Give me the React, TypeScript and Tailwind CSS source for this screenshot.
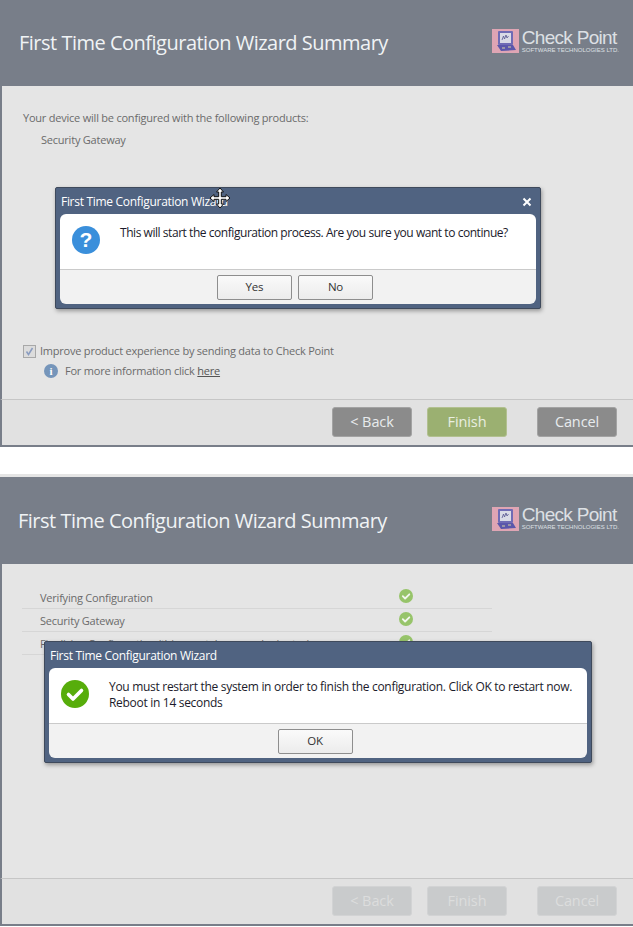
import React from 'react';

const uiFont = "font-['Open_Sans','Noto_Sans',sans-serif]";

function CheckPointLogo() {
  return (
    <div className="flex items-center gap-[3px] -mt-[4px]">
      <svg width="27" height="24" viewBox="0 0 27 24">
        <rect width="27" height="24" fill="#dfa5b4" />
        <rect x="6" y="2" width="15" height="14" rx="1" fill="#6f6bb5" />
        <rect x="8" y="4" width="11" height="10" fill="#d9dbe6" />
        <path d="M10 11l1.500-4 1 3 1.500-4 1 3 1.500-2" stroke="#55558f" strokeWidth="0.8" fill="none" />
        <path d="M5 16h16l3 5-15 1z" fill="#5b57ab" />
        <path d="M10 19h3M16 18h3" stroke="#d8d4a0" strokeWidth="1" />
      </svg>
      <div className="flex flex-col text-[#dde0e4] font-['Liberation_Sans',sans-serif]">
        <span className="text-[19px] leading-[18px] tracking-[-0.7px] whitespace-nowrap">Check Point</span>
        <span className="text-[6px] leading-[7px] whitespace-nowrap">SOFTWARE TECHNOLOGIES LTD.</span>
      </div>
    </div>
  );
}

function WizardButton({ label, tone }: { label: string; tone: 'gray' | 'green' | 'off' }) {
  const tones = {
    gray: 'bg-[#8b8b8b] border-[#a3a3a3] text-[#e8ebee]',
    green: 'bg-[#9bb071] border-[#b2c090] text-[#e9eee0]',
    off: 'bg-[#c9cbcc] border-[#d2d3d4] text-[#dcdddd]',
  };
  return (
    <div className={`w-[80px] h-[30px] rounded-[3px] border flex items-center justify-center text-[14.5px] tracking-[-0.1px] ${tones[tone]}`}>
      {label}
    </div>
  );
}

function WizardFrame({
  children,
  tone,
  headerHeight,
  bodyHeight,
  titleLeft,
}: {
  children: React.ReactNode;
  tone: 'gray' | 'off';
  headerHeight: string;
  bodyHeight: string;
  titleLeft: string;
}) {
  return (
    <div className="relative w-[633px] border-b-2 border-[#787e89]">
      <div className={`bg-[#787e89] flex items-center justify-between pr-[14px] ${headerHeight} ${titleLeft}`}>
        <h1 className="text-[20px] leading-[28px] tracking-[-0.5px] text-[#f0f3f5]">First Time Configuration Wizard Summary</h1>
        <CheckPointLogo />
      </div>
      <div className={`bg-[#e5e5e5] border-l-2 border-[#787e89] ${bodyHeight}`}>{children}</div>
      <div className="h-[46px] bg-[#e1e1e1] border-l-2 border-t border-t-[#c6c6c6] border-l-[#787e89] flex items-center justify-end pr-[16px] pb-[2px]">
        <WizardButton label="< Back" tone={tone} />
        <div className="ml-[15px]">
          <WizardButton label="Finish" tone={tone === 'off' ? 'off' : 'green'} />
        </div>
        <div className="ml-[30px]">
          <WizardButton label="Cancel" tone={tone} />
        </div>
      </div>
    </div>
  );
}

function Dialog({
  className,
  icon,
  lines,
  buttons,
  closable,
  textClass,
}: {
  className: string;
  icon: React.ReactNode;
  lines: string[];
  buttons: string[];
  closable?: boolean;
  textClass: string;
}) {
  return (
    <div className={`absolute bg-[#506381] border border-[#3f4a5c] rounded-[2px] shadow-[1px_2px_4px_rgba(0,0,0,0.35)] px-[4px] pb-[4px] ${className}`}>
      <div className="h-[26px] flex items-center justify-between pl-[1px] pt-[1px] pr-[4px] text-white text-[12px] tracking-[-0.3px]">
        <span>First Time Configuration Wizard</span>
        {closable && (
          <svg width="10" height="10" viewBox="0 0 10 10">
            <path d="M1.500 1.500l7 7M8.500 1.500l-7 7" stroke="#fff" strokeWidth="2" />
          </svg>
        )}
      </div>
      <div className="rounded-[6px] overflow-hidden">
        <div className="h-[55px] bg-white flex items-start pl-[12px] pt-[12px]">
          {icon}
          <div className={`ml-[20px] text-[12px] leading-[16px] text-[#1b1b2b] -mt-[1px] whitespace-nowrap ${textClass}`}>
            {lines.map(line => (
              <div key={line}>{line}</div>
            ))}
          </div>
        </div>
        <div className="h-[35px] bg-[#f2f2f2] border-t border-[#cacaca] flex items-center justify-center gap-[6px] pr-[6px]">
          {buttons.map(b => (
            <div
              key={b}
              className="w-[75px] h-[25px] rounded-[2px] border border-[#8e8e8e] bg-gradient-to-b from-[#fafafa] to-[#ececec] flex items-center justify-center text-[11.5px] tracking-[-0.2px] text-[#333]"
            >
              {b}
            </div>
          ))}
        </div>
      </div>
    </div>
  );
}

function QuestionIcon() {
  return (
    <div className="w-[28px] h-[28px] shrink-0 rounded-full bg-[#3a8fdb] text-white font-['Liberation_Sans',sans-serif] font-bold text-[21px] leading-[28px] text-center">
      ?
    </div>
  );
}

function SuccessIcon() {
  return (
    <svg width="28" height="28" viewBox="0 0 28 28" className="shrink-0">
      <circle cx="14" cy="14" r="14" fill="#57ad0b" />
      <path d="M7.500 14.500l4.500 4.500 8.500-8.500" stroke="#fff" strokeWidth="3.600" fill="none" strokeLinecap="round" strokeLinejoin="round" />
    </svg>
  );
}

function SmallCheck() {
  return (
    <svg width="14" height="14" viewBox="0 0 14 14" className="shrink-0 -mt-[3px]">
      <circle cx="7" cy="7" r="7" fill="#97c46a" />
      <path d="M3.800 7.200l2.300 2.300 4.200-4.200" stroke="#f3f7ee" strokeWidth="1.800" fill="none" strokeLinecap="round" strokeLinejoin="round" />
    </svg>
  );
}

function MoveCursor() {
  return (
    <svg width="22" height="22" viewBox="0 0 22 22" className="absolute left-[209px] top-[187px]">
      <path
        d="M11 1l3.500 4H12.300v4.700H17V7.500l4 3.500-4 3.500v-2.200h-4.700V17h2.200L11 21l-3.500-4h2.200v-4.700H5v2.200L1 11l4-3.500v2.200h4.700V5H7.500z"
        fill="#fff"
        stroke="#111"
        strokeWidth="1"
      />
    </svg>
  );
}

const progressRows = [
  'Verifying Configuration',
  'Security Gateway',
  'Finalizing Configuration (this may take several minutes)',
];

export default function App() {
  return (
    <div className={`relative w-[633px] h-[927px] bg-white overflow-hidden text-[#6b6b6b] ${uiFont}`}>
      {/* Step 1: confirmation */}
      <WizardFrame tone="gray" headerHeight="h-[86px]" bodyHeight="h-[313px]" titleLeft="pl-[19px]">
        <div className="pl-[21px] pt-[23px] text-[11px] tracking-[-0.22px]">
          <p className="leading-[18px]">Your device will be configured with the following products:</p>
          <p className="leading-[18px] pl-[18px] mt-[4px]">Security Gateway</p>
          <div className="flex items-center mt-[193px]">
            <div className="w-[13px] h-[13px] border border-[#a8a8a8] bg-[#dcdcdc] flex items-center justify-center">
              <svg width="9" height="9" viewBox="0 0 9 9">
                <path d="M1.500 4.500l2 3 4-6.500" stroke="#8a9cc0" strokeWidth="1.500" fill="none" />
              </svg>
            </div>
            <span className="ml-[4px] leading-[18px]">Improve product experience by sending data to Check Point</span>
          </div>
          <div className="flex items-center mt-[2px] pl-[21px]">
            <div className="w-[14px] h-[14px] rounded-full bg-[#7595ba] text-white text-[11px] font-bold leading-[14px] text-center font-['Liberation_Serif',serif]">
              i
            </div>
            <span className="ml-[7px] leading-[18px]">
              For more information click <span className="underline text-[#555]">here</span>
            </span>
          </div>
        </div>
      </WizardFrame>

      <div className="h-[30px] border-b-[3px] border-[#e5e5e5]" />

      {/* Step 2: restart prompt */}
      <WizardFrame tone="off" headerHeight="h-[87px]" bodyHeight="h-[314px]" titleLeft="pl-[18px]">
        <div className="pt-[22px] pl-[20px] w-[490px] text-[11px] tracking-[-0.22px]">
          {progressRows.map(row => (
            <div key={row} className="h-[23px] border-b border-[#d6d6d6] flex items-center justify-between pl-[18px] pr-[79px]">
              <span className="whitespace-nowrap mt-[2px]">{row}</span>
              <SmallCheck />
            </div>
          ))}
        </div>
      </WizardFrame>

      <Dialog
        className="left-[55px] top-[187px] w-[486px]"
        icon={<QuestionIcon />}
        lines={['This will start the configuration process. Are you sure you want to continue?']}
        buttons={['Yes', 'No']}
        closable
        textClass="tracking-[-0.45px]"
      />
      <Dialog
        className="left-[44px] top-[641px] w-[548px]"
        icon={<SuccessIcon />}
        lines={['You must restart the system in order to finish the configuration. Click OK to restart now.', 'Reboot in 14 seconds']}
        buttons={['OK']}
        textClass="tracking-[-0.3px]"
      />
      <MoveCursor />
    </div>
  );
}
